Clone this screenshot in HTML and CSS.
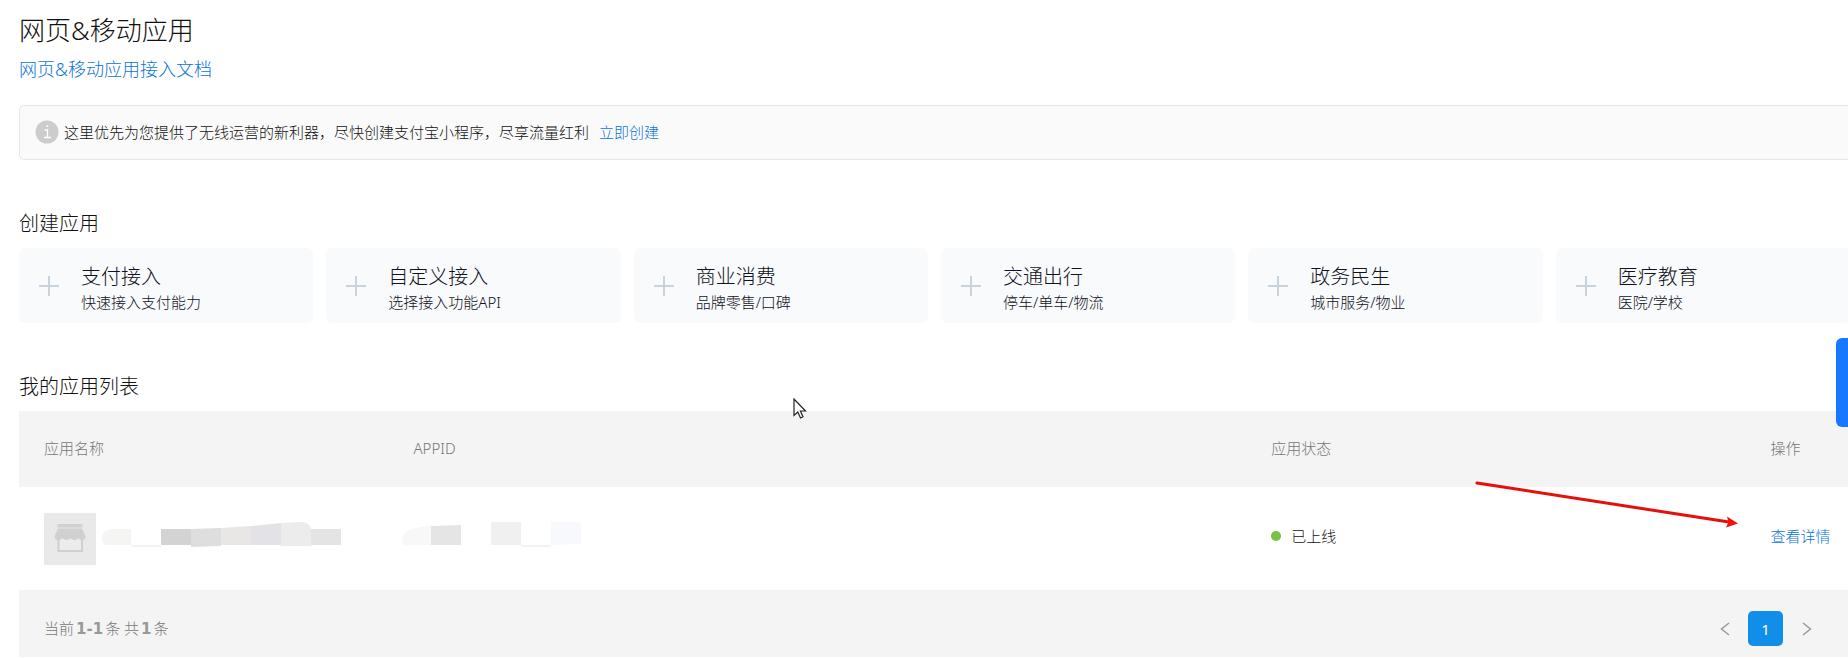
FILE: index.html
```
<!DOCTYPE html>
<html lang="zh-CN">
<head>
  <meta charset="UTF-8" />
  <title>网页&amp;移动应用</title>
  <link rel="stylesheet" href="styles.css">
</head>
<body>
  <main class="page">
    <h1 class="page-title">网页&amp;移动应用</h1>
    <a class="doc-link" href="#">网页&amp;移动应用接入文档</a>

    <div class="notice">
      <svg class="notice-icon" width="24" height="24" viewBox="0 0 24 24">
        <circle cx="12" cy="12" r="11.500" fill="#ccc" />
        <path d="M11.300 6h1.800M9.500 10h3v7.500M9 17.500h7" fill="none" stroke="#fff" stroke-width="1.300" />
      </svg>
      <span>这里优先为您提供了无线运营的新利器，尽快创建支付宝小程序，尽享流量红利</span>
      <a class="notice-link" href="#">立即创建</a>
    </div>

    <section class="section">
      <h2 class="section-title">创建应用</h2>
      <div class="cards">
        <a class="card" href="#">
          <svg class="plus" width="20" height="20" viewBox="0 0 20 20"><path d="M10 0v20M0 10h20" /></svg>
          <span class="card-text"><span class="card-name">支付接入</span><span class="card-desc">快速接入支付能力</span></span>
        </a>
        <a class="card" href="#">
          <svg class="plus" width="20" height="20" viewBox="0 0 20 20"><path d="M10 0v20M0 10h20" /></svg>
          <span class="card-text"><span class="card-name">自定义接入</span><span class="card-desc">选择接入功能API</span></span>
        </a>
        <a class="card" href="#">
          <svg class="plus" width="20" height="20" viewBox="0 0 20 20"><path d="M10 0v20M0 10h20" /></svg>
          <span class="card-text"><span class="card-name">商业消费</span><span class="card-desc">品牌零售/口碑</span></span>
        </a>
        <a class="card" href="#">
          <svg class="plus" width="20" height="20" viewBox="0 0 20 20"><path d="M10 0v20M0 10h20" /></svg>
          <span class="card-text"><span class="card-name">交通出行</span><span class="card-desc">停车/单车/物流</span></span>
        </a>
        <a class="card" href="#">
          <svg class="plus" width="20" height="20" viewBox="0 0 20 20"><path d="M10 0v20M0 10h20" /></svg>
          <span class="card-text"><span class="card-name">政务民生</span><span class="card-desc">城市服务/物业</span></span>
        </a>
        <a class="card" href="#">
          <svg class="plus" width="20" height="20" viewBox="0 0 20 20"><path d="M10 0v20M0 10h20" /></svg>
          <span class="card-text"><span class="card-name">医疗教育</span><span class="card-desc">医院/学校</span></span>
        </a>
      </div>
    </section>

    <section class="section">
      <h2 class="section-title">我的应用列表</h2>
      <table class="app-table">
        <thead>
          <tr>
            <th class="col-name">应用名称</th>
            <th class="col-id">APPID</th>
            <th class="col-status">应用状态</th>
            <th>操作</th>
          </tr>
        </thead>
        <tbody>
          <tr>
            <td>
              <div class="app">
                <svg width="52" height="52" viewBox="0 0 52 52">
                  <rect width="52" height="52" fill="#e9e9e9" />
                  <path d="M14.500 26v12h23.500V26" fill="#ececec" />
                  <path d="M14.500 26v12h23.500V26" fill="none" stroke="#d0d0d0" stroke-width="2" />
                  <path d="M13.500 11h25v3.500h-25z" fill="#d0d0d0" />
                  <path d="M14 15.500h24l3.500 8q0 3.500-3.500 3.500-2.500 0-3.500-2-1.500 2-4 2t-4-2q-1.500 2-4 2t-4-2q-1.500 2-4 2-4 0-4-3.500z" fill="#d0d0d0" />
                </svg>
                <!-- 应用名称打码 -->
                <svg width="240" height="52" viewBox="102 513 240 52">
                  <path d="M131 529h-19q-10 1-10 9 0 7 5 7h24z" fill="#f5f5f4" />
                  <path d="M131 545h30v2h-30z" fill="#f3f3f3" />
                  <path d="M161 529h30v16h-30z" fill="#d3d3d3" />
                  <path d="M191 529l30-1v18l-30 1z" fill="#dedede" />
                  <path d="M221 528l30-2v19h-30z" fill="#e8e7e5" />
                  <path d="M251 526l30-3v22h-30z" fill="#e3e3e7" />
                  <path d="M281 523l18-1q10-1 12 7v17h-30z" fill="#ececec" />
                  <path d="M311 529h30v16h-30z" fill="#e4e4e4" />
                </svg>
              </div>
            </td>
            <td>
              <svg class="mask-id" width="180" height="52" viewBox="402 513 180 52">
                <path d="M431 526q-29 2-29 13 0 6 4 6h25z" fill="#f8f8f8" />
                <path d="M431 526l30-1v20h-30z" fill="#e5e5e5" />
                <path d="M491 522h30v23h-30z" fill="#f0f0f0" />
                <path d="M521 545h30v2h-30z" fill="#f2f2f2" />
                <path d="M551 522h30v22l-30 1z" fill="#f8f9fc" />
              </svg>
            </td>
            <td class="text-cell"><span class="status">已上线</span></td>
            <td class="text-cell"><a href="#">查看详情</a></td>
          </tr>
        </tbody>
      </table>
      <div class="table-footer">
        <div class="total">当前<b>1-1</b>条 共<b>1</b>条</div>
        <nav class="pager">
          <button class="pager-btn" aria-label="上一页"><svg width="10" height="14" viewBox="0 0 10 14"><path d="M9 1L1.500 7 9 13" /></svg></button>
          <button class="pager-btn current">1</button>
          <button class="pager-btn" aria-label="下一页"><svg width="10" height="14" viewBox="0 0 10 14"><path d="M1 1l7.500 6L1 13" /></svg></button>
        </nav>
      </div>
    </section>
  </main>

  <button class="side-tab" aria-label="客服"></button>

  <svg class="arrow" width="264" height="50" viewBox="0 0 264 50">
    <path d="M2 4l252 39" stroke="#e60f0a" stroke-width="3" stroke-linecap="round" />
    <path d="M263 44.500l-11-7 1.500 5.500-2.500 5.500z" fill="#f5100a" />
  </svg>
  <svg class="cursor" width="14" height="21" viewBox="0 0 14 21">
    <path d="M1 1v16.500l3.800-3.500 2.700 6 2.500-1.200-2.600-5.800H12.500z" fill="#fff" stroke="#222" stroke-width="1.200" />
  </svg>
</body>
</html>
```
FILE: styles.css
```
* { box-sizing: border-box; }
body { margin: 0; background: #fff; color: #111; font: 300 15px/24px "Noto Sans", "Noto Sans CJK SC", sans-serif; overflow: hidden; }
a { color: #0d74dc; text-decoration: none; }
h1, h2 { margin: 0; font-weight: 300; }

.page { padding: 12px 0 0 19px; }
.page-title { font-size: 26px; line-height: 36px; }
.doc-link { display: block; margin-top: 8px; font-size: 18px; line-height: 26px; }

.notice { display: flex; align-items: center; height: 55px; margin-top: 23px; padding: 0 0 2px 15px; background: #fafafa; border: 1px solid #e6e6e6; border-right: none; border-radius: 5px 0 0 5px; }
.notice-icon { margin-right: 5px; }
.notice-link { margin-left: 10px; }

.section { margin-top: 49px; }
.section-title { margin-bottom: 9px; font-size: 20px; line-height: 30px; }

.cards { display: flex; gap: 13px; margin-right: -2px; }
.card { flex: 1; display: flex; align-items: center; height: 75px; padding-left: 20px; background: #f8fafc; border-radius: 6px; color: #112; }
.plus { margin-right: 22px; fill: none; stroke: #c8d3de; stroke-width: 2; }
.card-text { display: flex; flex-direction: column; padding-top: 4px; }
.card-name { font-size: 20px; line-height: 28px; }
.card-desc { line-height: 22px; }

.app-table { width: 100%; border-collapse: collapse; table-layout: fixed; }
.app-table th { height: 76px; padding: 0 0 2px 25px; background: #f4f4f4; color: #777; font-weight: 300; text-align: left; }
.app-table td { height: 103px; padding: 0 0 0 25px; white-space: nowrap; }
.app-table .text-cell { padding-bottom: 5px; }
.app-table svg { display: block; }
.col-name { width: 20.2%; }
.col-id { width: 46.9%; }
.col-status { width: 27.3%; }
.app { display: flex; gap: 6px; }
.mask-id { margin-left: -11px; }
.status { display: flex; align-items: center; gap: 10px; }
.status::before { content: ""; width: 10px; height: 10px; border-radius: 50%; background: #76c441; }

.table-footer { display: flex; justify-content: space-between; padding: 21px 24px 11px 25px; background: #f4f4f4; color: #777; }
.total { line-height: 35px; }
.total b { margin: 0 2px; font: bold 15px "DejaVu Sans", sans-serif; color: #999; }
.pager { display: flex; gap: 6px; }
.pager-btn { display: flex; align-items: center; justify-content: center; width: 35px; height: 35px; padding: 0; border: none; border-radius: 5px; background: none; font: inherit; cursor: pointer; }
.pager-btn svg { fill: none; stroke: #999; stroke-width: 1.5; }
.pager-btn.current { background: #108ee9; color: #fff; font-weight: 400; }

.side-tab { position: fixed; right: 0; top: 338px; width: 12px; height: 89px; padding: 0; border: none; border-radius: 6px 0 0 6px; background: #1677ff; }
.arrow { position: absolute; right: 109px; top: 479px; fill: none; }
.cursor { position: absolute; left: 793px; top: 398px; }
```
